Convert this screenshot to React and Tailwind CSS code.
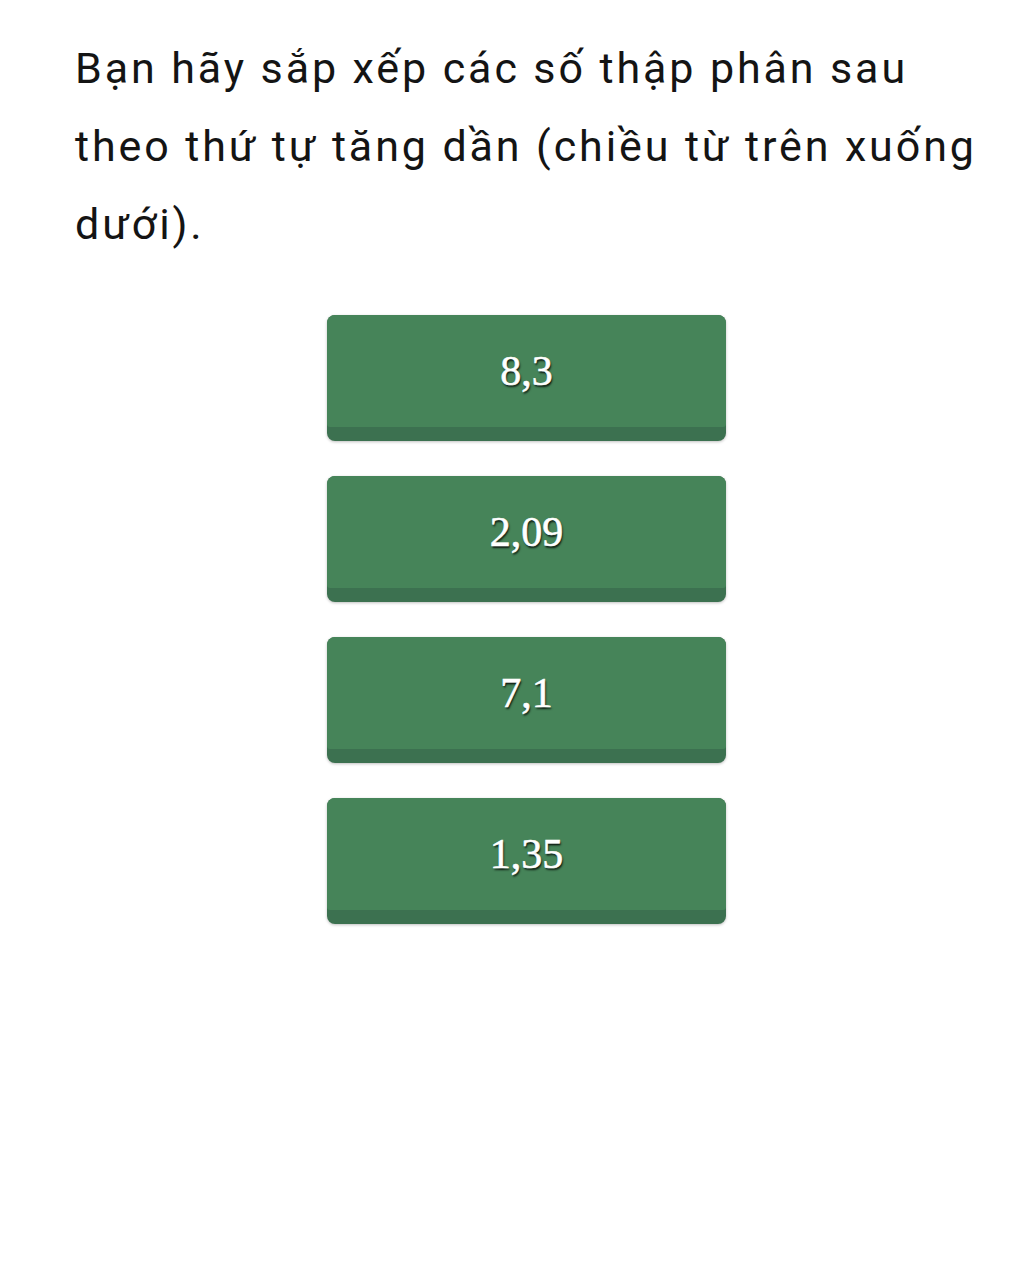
import React from 'react';

const items = ['8,3', '2,09', '7,1', '1,35'];

function NumberCard({ value }) {
  return (
    <div className="w-[399px] h-[126px] rounded-[8px] bg-[#3c7150] shadow-[0_1px_3px_rgba(0,0,0,0.25)] overflow-hidden">
      <div className="h-[112px] rounded-b-[3px] bg-[#468459] flex items-center justify-center">
        <span
          className="text-[42px] text-white font-['Liberation_Serif','DejaVu_Serif',serif] [text-shadow:1px_2px_2px_rgba(0,0,0,0.85)] [-webkit-text-stroke:0.6px_white]"
        >
          {value}
        </span>
      </div>
    </div>
  );
}

export default function App() {
  return (
    <div className="w-[1024px] min-h-[1280px] bg-white">
      <div className="pt-[29px] pl-[75px] w-[1000px]">
        <p className="text-[43px] leading-[78px] tracking-[2.9px] text-[#141414] font-['Roboto','Noto_Sans',sans-serif]">
          Bạn hãy sắp xếp các số thập phân sau theo thứ tự tăng dần (chiều từ trên xuống dưới).
        </p>
      </div>
      <div className="mt-[52px] flex flex-col gap-[35px] pl-[327px]">
        {items.map(item => (
          <NumberCard key={item} value={item} />
        ))}
      </div>
    </div>
  );
}
